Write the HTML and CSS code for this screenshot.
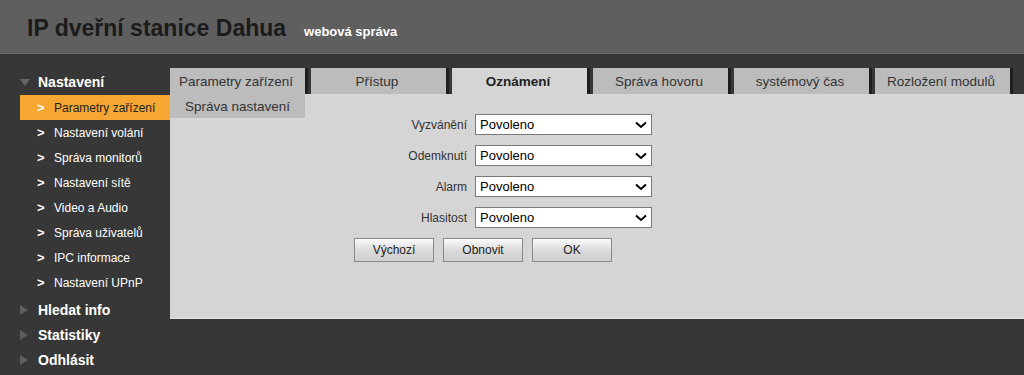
FILE: index.html
```html
<!DOCTYPE html>
<html lang="cs">
<head>
    <meta charset="UTF-8">
    <meta name="viewport" content="width=device-width, initial-scale=1.0">
    <title>IP dveřní stanice Dahua</title>
    <link rel="stylesheet" href="styles.css">
</head>
<body>
    <div class="header">
        <h1 class="title">IP dveřní stanice Dahua</h1>
        <span class="subtitle">webová správa</span>
    </div>
    <div class="main">
        <div class="sidebar">
            <div class="menu open"><span class="tri"></span>Nastavení</div>
            <div class="submenu">
                <div class="item active">Parametry zařízení</div>
                <div class="item">Nastavení volání</div>
                <div class="item">Správa monitorů</div>
                <div class="item">Nastavení sítě</div>
                <div class="item">Video a Audio</div>
                <div class="item">Správa uživatelů</div>
                <div class="item">IPC informace</div>
                <div class="item">Nastavení UPnP</div>
            </div>
            <div class="menu"><span class="tri"></span>Hledat info</div>
            <div class="menu"><span class="tri"></span>Statistiky</div>
            <div class="menu"><span class="tri"></span>Odhlásit</div>
        </div>
        <div class="content">
            <div class="tabs">
                <div class="tab">Parametry zařízení</div>
                <div class="tab">Přístup</div>
                <div class="tab active">Oznámení</div>
                <div class="tab">Správa hovoru</div>
                <div class="tab">systémový čas</div>
                <div class="tab">Rozložení modulů</div>
            </div>
            <div class="panel">
                <div class="subtab">Správa nastavení</div>
                <div class="form">
                    <label>Vyzvánění</label>
                    <div class="select"><span>Povoleno</span><svg width="12" height="8" viewBox="0 0 12 8"><path d="M1 1.5 L6 6 L11 1.5" fill="none" stroke="#000" stroke-width="2"/></svg></div>
                    <label>Odemknutí</label>
                    <div class="select"><span>Povoleno</span><svg width="12" height="8" viewBox="0 0 12 8"><path d="M1 1.5 L6 6 L11 1.5" fill="none" stroke="#000" stroke-width="2"/></svg></div>
                    <label>Alarm</label>
                    <div class="select"><span>Povoleno</span><svg width="12" height="8" viewBox="0 0 12 8"><path d="M1 1.5 L6 6 L11 1.5" fill="none" stroke="#000" stroke-width="2"/></svg></div>
                    <label>Hlasitost</label>
                    <div class="select"><span>Povoleno</span><svg width="12" height="8" viewBox="0 0 12 8"><path d="M1 1.5 L6 6 L11 1.5" fill="none" stroke="#000" stroke-width="2"/></svg></div>
                </div>
                <div class="buttons">
                    <button class="btn">Výchozí</button>
                    <button class="btn">Obnovit</button>
                    <button class="btn">OK</button>
                </div>
            </div>
        </div>
    </div>
</body>
</html>
```

FILE: styles.css
```css
* {
  margin: 0;
  padding: 0;
  box-sizing: border-box;
}

body {
  font-family: "Liberation Sans", Arial, sans-serif;
  background-color: #373737;
  height: 375px;
  overflow: hidden;
}

.header {
  height: 54px;
  background-color: #5f5f5f;
  border-bottom: 1px solid #6a6a6a;
  display: flex;
  align-items: baseline;
  padding: 15px 0 0 27px;
}

.title {
  font-size: 23px;
  font-weight: bold;
  color: #1b1b1b;
}

.subtitle {
  margin-left: 18px;
  font-size: 13px;
  font-weight: bold;
  color: #fff;
}

.main {
  display: flex;
  padding-top: 14px;
}

.sidebar {
  width: 170px;
  padding: 1px 0 0 20px;
  flex-shrink: 0;
}

.menu {
  height: 25px;
  display: flex;
  align-items: center;
  color: #fff;
  font-size: 14px;
  font-weight: bold;
}

.menu.open {
  height: 26px;
}

.tri {
  width: 0;
  height: 0;
  border-top: 5px solid transparent;
  border-bottom: 5px solid transparent;
  border-left: 8px solid #5e5e5e;
  margin-right: 10px;
}

.menu.open .tri {
  border-left: 5px solid transparent;
  border-right: 5px solid transparent;
  border-top: 7px solid #666;
  border-bottom: none;
  margin-right: 8px;
}

.submenu {
  margin-bottom: 2px;
}

.item {
  height: 25px;
  display: flex;
  align-items: center;
  padding-left: 17px;
  color: #fff;
  font-size: 12px;
}

.item::before {
  content: ">";
  font-weight: bold;
  font-size: 13px;
  width: 17px;
}

.item.active {
  background-color: #f6a633;
  color: #222;
}

.item.active::before {
  color: #fff;
}

.content {
  flex: 1;
}

.tabs {
  display: flex;
  gap: 3px;
  height: 26px;
}

.tab {
  width: 138px;
  height: 26px;
  padding-right: 3px;
  background-color: #bcbcbc;
  border-right: 3px solid #1e1e1e;
  display: flex;
  align-items: center;
  justify-content: center;
  font-size: 13.5px;
  color: #333;
}

.tab.active {
  background-color: #d5d5d5;
  font-weight: bold;
  color: #222;
}

.panel {
  height: 225px;
  background-color: #d5d5d5;
  border-bottom: 1px solid #e4e4e4;
}

.subtab {
  width: 135px;
  height: 24px;
  background-color: #bcbcbc;
  display: flex;
  align-items: center;
  justify-content: center;
  font-size: 13.5px;
  color: #333;
}

.form {
  display: grid;
  grid-template-columns: 297px 177px;
  column-gap: 8px;
  row-gap: 10px;
  margin-top: -4px;
}

.form label {
  justify-self: end;
  align-self: center;
  font-size: 12px;
  color: #333;
}

.select {
  height: 21px;
  background-color: #fff;
  border: 1px solid #7a7a7a;
  display: flex;
  align-items: center;
  justify-content: space-between;
  padding: 0 4px 0 4px;
  font-size: 13px;
  color: #000;
}

.buttons {
  display: flex;
  gap: 9px;
  margin: 10px 0 0 184px;
}

.btn {
  width: 80px;
  height: 24px;
  font-family: "Liberation Sans", Arial, sans-serif;
  font-size: 12px;
  color: #222;
  border: 1px solid #8a8a8a;
  background: linear-gradient(#fbfbfb, #d9d9d9 55%, #cfcfcf);
}
```
